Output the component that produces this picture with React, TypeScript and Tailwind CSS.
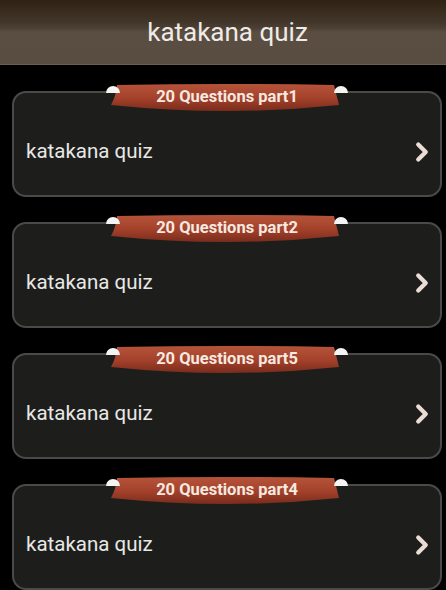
import { ChevronRight } from "lucide-react";

const PARTS = ["part1", "part2", "part5", "part4"];

function Ribbon({ label }: { label: string }) {
  return (
    <div className="absolute left-1/2 top-[-10px] h-[33px] w-[242px] -translate-x-1/2">
      <svg width="242" height="33" viewBox="0 0 242 33" className="absolute inset-0">
        <defs>
          <linearGradient id="rib" x1="0" y1="0" x2="0" y2="1">
            <stop offset="0%" stopColor="#b6543a" />
            <stop offset="55%" stopColor="#a2402a" />
            <stop offset="100%" stopColor="#7a2c1c" />
          </linearGradient>
        </defs>
        <path d="M11 2 Q121 0 228 2 L233 22 Q121 34 5 22 Q10 13 11 2 Z" fill="url(#rib)" />
        <path d="M0 10 A7 7 0 0 1 14 10 Z" fill="#f4f4f2" />
        <path d="M228 10 A7 7 0 0 1 242 10 Z" fill="#f4f4f2" />
      </svg>
      <div className="relative pt-[3px] text-center text-[16.5px] font-bold leading-[22px] text-[#f6e9e0] [font-family:Roboto,sans-serif]">
        20 Questions {label}
      </div>
    </div>
  );
}

export default function App() {
  return (
    <div className="min-h-screen w-full overflow-hidden bg-black [font-family:Roboto,sans-serif]">
      {/* Header */}
      <div className="flex h-[65px] items-center justify-center border-b border-[#6b5f55] pl-[9px] bg-[linear-gradient(180deg,#2d2215_0px,#352819_6px,#3b2f22_14px,#42362a_22px,#4c4034_28px,#5a4d42_32px,#594c41_64px)]">
        <h1 className="text-[26px] font-normal text-[#efebe7]">katakana quiz</h1>
      </div>

      {/* List */}
      <div className="flex flex-col gap-[25px] pl-[12px] pr-[4px] pt-[26px]">
        {PARTS.map((p) => (
          <div
            key={p}
            className="relative h-[106px] rounded-[14px] border-2 border-[#4a4a48] bg-[#1d1e1c]"
          >
            <Ribbon label={p} />
            <div className="flex h-full items-center justify-between pl-[12px] pr-[3px] pt-[15px]">
              <span className="text-[20.5px] text-[#e8e8e6]">katakana quiz</span>
              <ChevronRight size={30} strokeWidth={3.4} className="text-[#ecdcd6]" />
            </div>
          </div>
        ))}
      </div>
    </div>
  );
}
